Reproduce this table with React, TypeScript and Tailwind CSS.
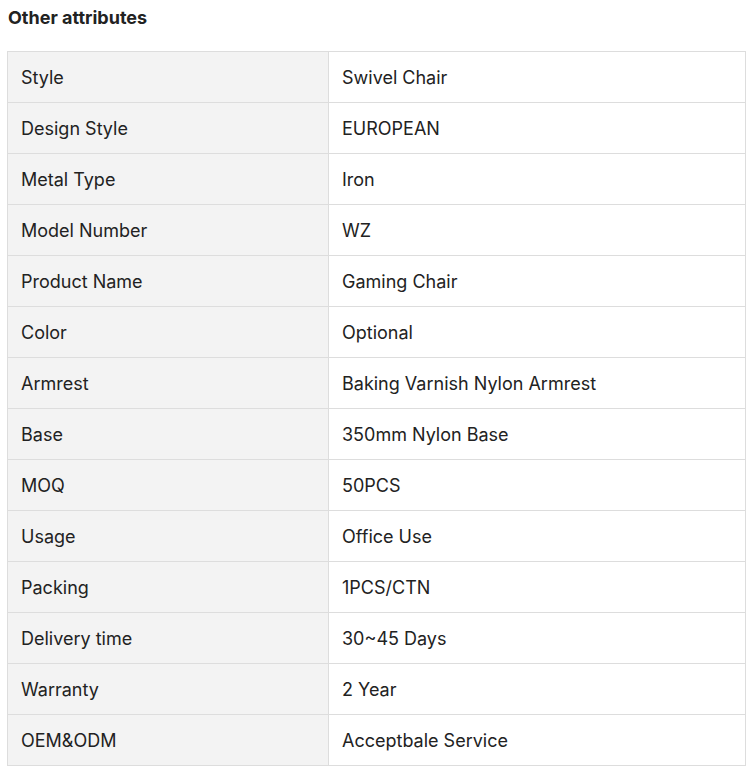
const rows: [string, string][] = [
  ['Style', 'Swivel Chair'],
  ['Design Style', 'EUROPEAN'],
  ['Metal Type', 'Iron'],
  ['Model Number', 'WZ'],
  ['Product Name', 'Gaming Chair'],
  ['Color', 'Optional'],
  ['Armrest', 'Baking Varnish Nylon Armrest'],
  ['Base', '350mm Nylon Base'],
  ['MOQ', '50PCS'],
  ['Usage', 'Office Use'],
  ['Packing', '1PCS/CTN'],
  ['Delivery time', '30~45 Days'],
  ['Warranty', '2 Year'],
  ['OEM&ODM', 'Acceptbale Service'],
];

export default function App() {
  return (
    <div className="bg-white pl-[7px] pt-[5px] font-['Inter',sans-serif] text-[#222]">
      <h3 className="pl-[1px] text-[18px] font-bold leading-[26px]">Other attributes</h3>
      <table className="mt-[20px] w-[739px] border-collapse text-[18px]">
        <tbody>
          {rows.map(([k, v]) => (
            <tr key={k} className="h-[51px]">
              <td className="w-[321px] border border-[#dddddd] bg-[#f3f3f3] px-[13px]">{k}</td>
              <td className="border border-[#dddddd] px-[13px]">{v}</td>
            </tr>
          ))}
        </tbody>
      </table>
    </div>
  );
}
